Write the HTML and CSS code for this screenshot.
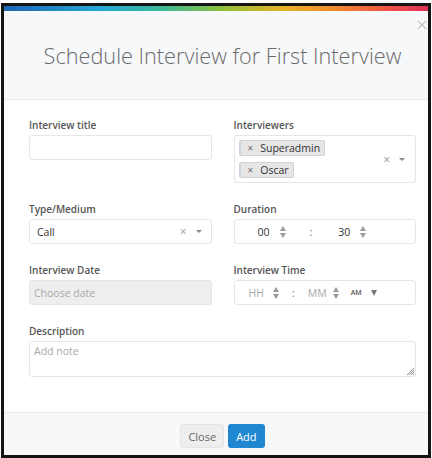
FILE: index.html
```html
<!DOCTYPE html>
<html lang="en">
<head>
  <meta charset="UTF-8" />
  <meta name="viewport" content="width=device-width, initial-scale=1.0"/>
  <title>Schedule Interview</title>
  <link rel="stylesheet" href="styles.css">
</head>
<body>
  <div class="frame">
    <div class="modal">
      <div class="modal-stripe"></div>

      <div class="modal-header">
        <span class="modal-close">&times;</span>
        <h2>Schedule Interview for First Interview</h2>
      </div>

      <div class="modal-body">
        <div class="form-group">
          <label>Interview title</label>
          <div class="field"></div>
        </div>

        <div class="form-group">
          <label>Interviewers</label>
          <div class="field field-multi">
            <div class="tags">
              <span class="tag"><i>&times;</i>Superadmin</span>
              <span class="tag"><i>&times;</i>Oscar</span>
            </div>
            <span class="select-clear">&times;</span>
            <span class="select-arrow"></span>
          </div>
        </div>

        <div class="form-group">
          <label>Type/Medium</label>
          <div class="field field-select">
            <span class="value">Call</span>
            <span class="select-clear">&times;</span>
            <span class="select-arrow"></span>
          </div>
        </div>

        <div class="form-group">
          <label>Duration</label>
          <div class="field field-spin duration">
            <span class="num">00</span>
            <span class="spin"><b class="up"></b><b class="down"></b></span>
            <span class="colon">:</span>
            <span class="num">30</span>
            <span class="spin"><b class="up"></b><b class="down"></b></span>
          </div>
        </div>

        <div class="form-group">
          <label>Interview Date</label>
          <div class="field field-disabled"><span class="placeholder">Choose date</span></div>
        </div>

        <div class="form-group">
          <label>Interview Time</label>
          <div class="field field-spin time">
            <span class="num placeholder">HH</span>
            <span class="spin"><b class="up"></b><b class="down"></b></span>
            <span class="colon">:</span>
            <span class="num placeholder">MM</span>
            <span class="spin"><b class="up"></b><b class="down"></b></span>
            <span class="ampm">AM</span>
            <span class="ampm-arrow"></span>
          </div>
        </div>

        <div class="form-group wide">
          <label>Description</label>
          <div class="field field-area">
            <span class="placeholder">Add note</span>
            <svg class="grip" width="8" height="8" viewBox="0 0 8 8">
              <path d="M8 1 L1 8 M8 3 L3 8 M8 5 L5 8 M8 7 L7 8" stroke="#777" stroke-width="0.8"/>
            </svg>
          </div>
        </div>
      </div>

      <div class="modal-footer">
        <button class="btn btn-default">Close</button>
        <button class="btn btn-primary">Add</button>
      </div>
    </div>
  </div>
</body>
</html>
```

FILE: styles.css
```css
body {
  margin: 0;
  background: #fff;
  font-family: "Open Sans", "Noto Sans", sans-serif;
  color: #333;
}

/* outer black frame, crops the right side of the dialog */
.frame {
  width: 424px;
  height: 449px;
  margin: 3px 0 0 1px;
  border: 3px solid #141414;
  overflow: hidden;
}

.modal {
  width: 437px;
  height: 449px;
  background: #fff;
  display: flex;
  flex-direction: column;
}

.modal-stripe {
  height: 5px;
  flex: none;
  background: linear-gradient(to right, #1f65b5 0%, #24a9d6 22%, #3cb89a 36%, #8fc03a 50%, #e7b227 64%, #f3892f 76%, #ee5146 88%, #d9255f 100%);
}

.modal-header {
  position: relative;
  flex: none;
  height: 88px;
  background: #f7f8fa;
  border-bottom: 1px solid #eaecef;
  text-align: center;
}

.modal-header h2 {
  margin: 0;
  padding-top: 30px;
  font-size: 21.7px;
  line-height: 29px;
  font-weight: 300;
  color: #6a6a6a;
}

.modal-close {
  position: absolute;
  top: -1px;
  right: 13px;
  font-size: 21px;
  font-weight: 300;
  color: #b5b5b5;
}

.modal-body {
  flex: none;
  padding: 18px 25px 35px;
  display: grid;
  grid-template-columns: 1fr 1fr;
  column-gap: 22px;
  row-gap: 19px;
  align-items: start;
  align-content: start;
}

.form-group.wide {
  grid-column: 1 / -1;
}

.form-group label {
  display: block;
  font-size: 10px;
  line-height: 14px;
  font-weight: 600;
  color: #555;
  margin-bottom: 3px;
}

.field {
  box-sizing: border-box;
  height: 25px;
  border: 1px solid #e4e6e8;
  border-radius: 3px;
  background: #fff;
  font-size: 10.5px;
  display: flex;
  align-items: center;
  padding: 0 7px;
}

.placeholder {
  color: #a9a9a9;
}

.field-disabled {
  background: #eeeeee;
  border-color: #e6e6e6;
  padding-left: 4px;
}

.field-select .value {
  flex: 1;
}

.select-clear {
  color: #999;
  font-size: 12px;
  margin-right: 9px;
}

.select-arrow {
  width: 0;
  height: 0;
  border-left: 3px solid transparent;
  border-right: 3px solid transparent;
  border-top: 3px solid #888;
  margin-right: 2px;
}

.field-multi {
  height: 48px;
  padding: 0 8px 0 4px;
}

.field-multi .tags {
  flex: 1;
  display: flex;
  flex-direction: column;
  align-items: flex-start;
  gap: 6px;
}

.tag {
  box-sizing: border-box;
  height: 16px;
  display: flex;
  align-items: center;
  padding: 0 4px 0 7px;
  background: #e6e6e6;
  border: 1px solid #cfd3d6;
  border-left: 2px solid #c9d6e2;
  border-radius: 2px;
  font-size: 10.5px;
  color: #333;
}

.tag i {
  font-style: normal;
  font-size: 10px;
  color: #666;
  margin-right: 7px;
}

.field-spin {
  padding: 0;
}

.num {
  display: inline-block;
  text-align: right;
}

.spin {
  display: inline-flex;
  flex-direction: column;
  gap: 2px;
}

.spin b {
  width: 0;
  height: 0;
  border-left: 3px solid transparent;
  border-right: 3px solid transparent;
}

.spin .up {
  border-bottom: 5px solid #9a9a9a;
}

.spin .down {
  border-top: 5px solid #9a9a9a;
}

.colon {
  color: #777;
}

.duration .num:nth-child(1) { margin-left: 23px; width: 12px; }
.duration .spin:nth-child(2) { margin-left: 10px; }
.duration .colon { margin-left: 24px; }
.duration .num:nth-child(4) { margin-left: 26px; width: 12px; }
.duration .spin:nth-child(5) { margin-left: 10px; }

.time .num:nth-child(1) { margin-left: 14px; }
.time .spin:nth-child(2) { margin-left: 9px; }
.time .colon { margin-left: 13px; }
.time .num:nth-child(4) { margin-left: 13px; }
.time .spin:nth-child(5) { margin-left: 6px; }

.ampm {
  font-size: 7px;
  font-weight: 600;
  color: #555;
  margin-left: 12px;
}

.ampm-arrow {
  width: 0;
  height: 0;
  border-left: 3.5px solid transparent;
  border-right: 3.5px solid transparent;
  border-top: 6px solid #777;
  margin-left: 9px;
}

.field-area {
  position: relative;
  height: 36px;
  align-items: flex-start;
  padding: 2px 4px;
}

.grip {
  position: absolute;
  right: 1px;
  bottom: 1px;
}

.modal-footer {
  flex: 1;
  background: #f7f8fa;
  border-top: 1px solid #eaecef;
  display: flex;
  justify-content: center;
  align-items: flex-start;
  gap: 4px;
  padding-top: 11px;
}

.btn {
  height: 24px;
  border: none;
  border-radius: 3px;
  font-family: inherit;
  font-size: 11px;
  padding: 0 8px;
  cursor: pointer;
}

.btn-default {
  background: #eeeeee;
  color: #666;
  border: 1px solid #e4e4e4;
  padding: 0 7px;
}

.btn-primary {
  background: #2088d0;
  color: #fff;
}
```
